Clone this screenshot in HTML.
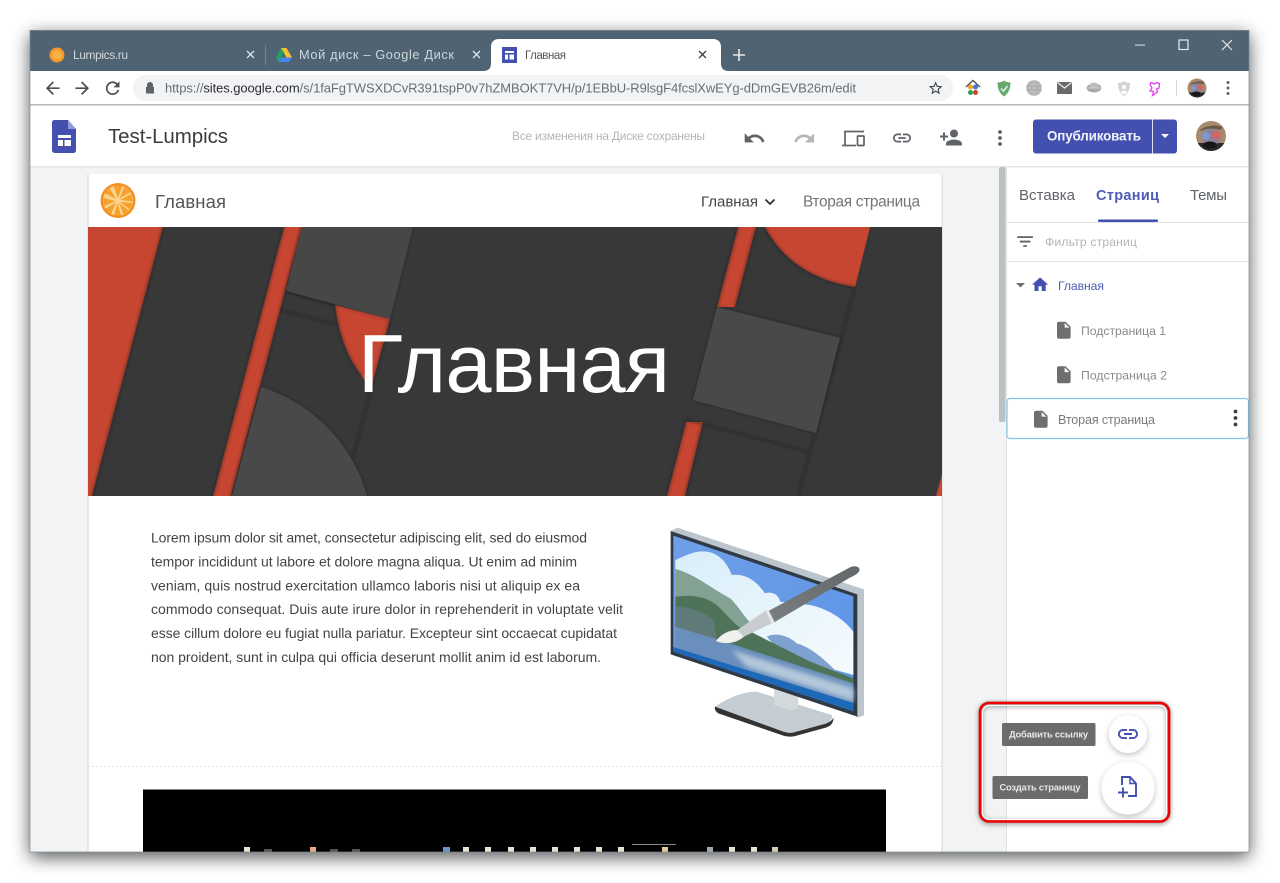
<!DOCTYPE html>
<html lang="ru"><head><meta charset="utf-8"><title>Главная</title>
<style>
html,body{margin:0;padding:0;background:#fff;width:1280px;height:883px;overflow:hidden}
svg{display:block;filter:blur(.3px)}
text{font-family:"Liberation Sans","Noto Sans CJK SC",sans-serif;white-space:pre}
</style></head><body>
<svg xmlns="http://www.w3.org/2000/svg" width="1280" height="883" viewBox="0 0 1280 883">
<defs>
<filter id="win" x="-10%" y="-10%" width="120%" height="120%"><feGaussianBlur stdDeviation="9"/></filter>
<filter id="s" x="-20%" y="-20%" width="140%" height="140%"><feDropShadow dx="0" dy="0" stdDeviation="2" flood-color="#000" flood-opacity=".35"/></filter>
<filter id="b" x="-20%" y="-20%" width="140%" height="140%"><feGaussianBlur stdDeviation="1.400"/></filter>
<filter id="bb" x="-30%" y="-30%" width="160%" height="160%"><feGaussianBlur stdDeviation="1"/></filter>
<filter id="wb" x="-10%" y="-30%" width="120%" height="160%"><feGaussianBlur stdDeviation="7"/></filter>
<filter id="fab" x="-40%" y="-40%" width="180%" height="180%"><feDropShadow dx="0" dy="2" stdDeviation="3" flood-color="#000" flood-opacity=".25"/></filter>
<filter id="box" x="-10%" y="-10%" width="120%" height="120%"><feDropShadow dx="0" dy="1" stdDeviation="2.500" flood-color="#000" flood-opacity=".6"/></filter>
<clipPath id="hero"><rect x="88" y="227" width="854" height="269"/></clipPath>
<clipPath id="wc"><rect x="30" y="30" width="1219" height="822"/></clipPath>
<clipPath id="avc"><circle cx="15" cy="15" r="15"/></clipPath>
<linearGradient id="sky" x1="0" y1="0" x2="1" y2="1"><stop offset="0" stop-color="#6f9fe8"/><stop offset="1" stop-color="#5b94e6"/></linearGradient>
<linearGradient id="cloud" x1="0" y1="0" x2="1" y2="1"><stop offset="0" stop-color="#d8eefa"/><stop offset="1" stop-color="#f6fbfe"/></linearGradient>
<linearGradient id="brush" x1="0" y1="1" x2="1" y2="0"><stop offset="0" stop-color="#7b7f82"/><stop offset="1" stop-color="#62676a"/></linearGradient>
<path id="file" d="M6 2c-1.100 0-2 .9-2 2v16c0 1.100.9 2 2 2h12c1.100 0 2-.9 2-2V8l-6-6H6zm7 7V3.500L18.500 9H13z"/>
<path id="link" d="M3.900 12c0-1.710 1.390-3.100 3.100-3.100h4V7H7c-2.760 0-5 2.240-5 5s2.240 5 5 5h4v-1.900H7c-1.710 0-3.100-1.390-3.100-3.100zM8 13h8v-2H8v2zm9-6h-4v1.900h4c1.710 0 3.100 1.390 3.100 3.100s-1.390 3.100-3.100 3.100h-4V17h4c2.760 0 5-2.240 5-5s-2.240-5-5-5z"/>
<g id="face" clip-path="url(#avc)">
<rect width="30" height="30" fill="#a98a6c"/>
<rect y="22" width="30" height="8" fill="#2a2a2c"/>
<ellipse cx="15" cy="16" rx="9" ry="9" fill="#8a7f98" filter="url(#bb)"/>
<ellipse cx="10" cy="15" rx="4" ry="4" fill="#7f9ccf" filter="url(#bb)"/>
<ellipse cx="20" cy="14" rx="4" ry="4" fill="#e0625a" filter="url(#bb)"/>
<path d="M4 9c5-4 17-6 22-3l-1 3c-7-2-15-2-20 1z" fill="#6a5a48"/>
<ellipse cx="14" cy="24" rx="7" ry="3.500" fill="#17171a"/>
</g>
</defs>

<!-- window shadow -->
<rect x="30" y="35" width="1219" height="822" fill="#000" opacity=".68" filter="url(#win)"/>
<rect x="30" y="30" width="1219" height="822" fill="#fff"/>

<g clip-path="url(#wc)">
<!-- title bar -->
<rect x="30" y="30" width="1219" height="41" fill="#4f6372"/>
<!-- tab 1 -->
<circle cx="57" cy="55" r="7.500" fill="#f39a2b"/><circle cx="57" cy="55" r="4.500" fill="#f8b24c"/>
<text x="73" y="59" font-size="12" fill="#cfd7dc" textLength="55" lengthAdjust="spacing">Lumpics.ru</text>
<path d="M247 51l7 7M254 51l-7 7" stroke="#dfe4e8" stroke-width="1.300"/>
<rect x="265" y="45" width="1" height="20" fill="#74848f"/>
<!-- drive -->
<path d="M281 48h5.500l5.500 9.500h-5.500z" fill="#f9c02e"/><path d="M281 48l-5 9.500 2.500 4.500 5.500-9.500z" fill="#1fa463"/><path d="M278.500 62h10.500l3-4.500h-10.500z" fill="#4285f4"/>
<text x="299" y="59" font-size="12.800" fill="#cfd7dc" textLength="155" lengthAdjust="spacing">Мой диск – Google Диск</text>
<path d="M473 51l7 7M480 51l-7 7" stroke="#dfe4e8" stroke-width="1.300"/>
<!-- active tab -->
<path d="M483 71c6 0 8-3 8-8V47c0-5 3-8 8-8h214c5 0 8 3 8 8v16c0 5 2 8 8 8z" fill="#fff"/>
<rect x="502" y="47" width="15" height="16" fill="#4350af"/><rect x="505" y="51" width="9" height="2" fill="#fff"/><rect x="505" y="54.500" width="3" height="5" fill="#fff"/><rect x="509.500" y="54.500" width="4.500" height="5" fill="#fff"/>
<text x="525" y="59" font-size="11.500" fill="#555" textLength="41" lengthAdjust="spacing">Главная</text>
<path d="M699 51l7 7M706 51l-7 7" stroke="#444" stroke-width="1.400"/>
<path d="M739 49v12M733 55h12" stroke="#e6eaed" stroke-width="1.600"/>
<!-- window controls -->
<rect x="1135" y="44.500" width="10" height="1.200" fill="#c8d0d6"/>
<rect x="1179" y="40" width="9" height="9.500" fill="none" stroke="#e6eaed" stroke-width="1.200"/>
<path d="M1222 40l10 10M1232 40l-10 10" stroke="#e6eaed" stroke-width="1.200"/>

<!-- toolbar -->
<rect x="30" y="71" width="1219" height="34" fill="#fff"/>
<rect x="30" y="104" width="1219" height="1.500" fill="#b4b6b8"/>
<g fill="#4d5155">
<path transform="translate(42.500 78) scale(.85)" d="M20 11H7.830l5.590-5.590L12 4l-8 8 8 8 1.410-1.410L7.830 13H20v-2z"/>
<path transform="translate(72 78) scale(.85)" d="M12 4l-1.410 1.410L16.170 11H4v2h12.170l-5.580 5.590L12 20l8-8z"/>
<path transform="translate(102.500 78) scale(.85)" d="M17.650 6.350C16.200 4.900 14.210 4 12 4c-4.420 0-7.990 3.580-7.990 8s3.570 8 7.990 8c3.730 0 6.840-2.550 7.730-6h-2.080c-.82 2.330-3.040 4-5.650 4-3.310 0-6-2.690-6-6s2.690-6 6-6c1.660 0 3.140.69 4.220 1.780L13 11h7V4l-2.350 2.350z"/>
</g>
<rect x="133" y="75" width="820" height="26" rx="13" fill="#f1f3f4"/>
<path d="M147 87v-2a3 3 0 0 1 6 0v2h1v6.500h-8V87z" fill="#5f6368"/>
<text x="165" y="92.500" font-size="13" fill="#6a6e73" textLength="691" lengthAdjust="spacing">https://<tspan fill="#2b2d30">sites.google.com</tspan>/s/1faFgTWSXDCvR391tspP0v7hZMBOKT7VH/p/1EBbU-R9lsgF4fcslXwEYg-dDmGEVB26m/edit</text>
<path transform="translate(927.500 80) scale(.68)" fill="#3c4043" d="M22 9.240l-7.190-.62L12 2 9.190 8.630 2 9.240l5.460 4.730L5.820 21 12 17.270 18.180 21l-1.630-7.030L22 9.240zM12 15.400l-3.760 2.270 1-4.280-3.320-2.880 4.380-.38L12 6.100l1.710 4.040 4.380.38-3.320 2.880 1 4.280L12 15.400z"/>
<!-- extensions -->
<path d="M966 87l7-6.500 7 6.500" fill="none" stroke="#555" stroke-width="1.500"/>
<circle cx="970.500" cy="87" r="2.500" fill="#f4a020"/><circle cx="975.500" cy="87" r="2.500" fill="#3a78d8"/><circle cx="970.500" cy="92.500" r="2.500" fill="#2f9e4f"/><circle cx="975.500" cy="92.500" r="2.500" fill="#d93a2f"/>
<path d="M997.500 82.500c3 0 5-1 6.500-2 1.500 1 3.500 2 6.500 2 0 6-2 11-6.500 14-4.500-3-6.500-8-6.500-14z" fill="#68a96f"/>
<path d="M1001 88.500l2.500 2.500 4-5" fill="none" stroke="#e8f3e8" stroke-width="1.500"/>
<circle cx="1034" cy="88" r="7.800" fill="#b0b0b0"/><path d="M1026.500 88h15M1034 80.500v15M1028 84h12M1028 92h12" stroke="#c8c8c8" stroke-width=".8" fill="none"/>
<rect x="1057" y="82" width="15" height="12" fill="#6a6a6a"/><path d="M1057.500 82.500l7 5.500 7-5.500" fill="none" stroke="#e9e9e9" stroke-width="1.300"/>
<ellipse cx="1094" cy="88" rx="7.500" ry="4.500" fill="#a9a9a9"/><ellipse cx="1094" cy="85.500" rx="4.500" ry="3" fill="#bdbdbd"/><path d="M1087 88h14" stroke="#e0e0e0" stroke-width=".8"/>
<path d="M1118 83c3 0 4.500-1 6-2 1.500 1 3 2 6 2 0 6-1.500 10.500-6 13.500-4.500-3-6-7.500-6-13.500z" fill="#d4d6d6"/><circle cx="1124" cy="87" r="2" fill="#fff"/><path d="M1120.500 92.500c1-2.500 6-2.500 7 0l-3.500 2.500z" fill="#fff"/>
<path d="M1151 82.500l3 1.500 3-1.500 2.500 1-.5 4.500-2.500 1 1 3-5 3.500 1-4-3.500-.5 2-3-2-3.500z" fill="none" stroke="#e040f0" stroke-width="1.300"/>
<rect x="1176" y="80" width="1" height="16" fill="#d5d5d5"/>
<use href="#face" transform="translate(1187.500 78.500) scale(.633)"/>
<g fill="#5f6368"><circle cx="1228" cy="82.500" r="1.500"/><circle cx="1228" cy="88" r="1.500"/><circle cx="1228" cy="93.500" r="1.500"/></g>

<!-- app header -->
<rect x="30" y="105.500" width="1219" height="61.500" fill="#fff"/>
<rect x="30" y="166" width="1219" height="1.500" fill="#e4e6e7"/>
<path d="M55 120h13l8 9v21.500c0 1.400-1.100 2.500-2.500 2.500h-18.500c-1.400 0-3-1.100-3-2.500v-28c0-1.400 1.100-2.500 2.500-2.500z" fill="#4350af"/>
<path d="M68 120v9h8z" fill="#8f99d6"/>
<rect x="58" y="135" width="13" height="3" fill="#fff"/><rect x="58" y="140" width="5" height="6" fill="#fff"/><rect x="64.500" y="140" width="6.500" height="6" fill="#fff"/>
<text x="108" y="143" font-size="20.500" fill="#3c3c3c" textLength="120" lengthAdjust="spacing">Test-Lumpics</text>
<text x="512" y="140" font-size="11.800" fill="#b4b4b4" textLength="193" lengthAdjust="spacing">Все изменения на Диске сохранены</text>
<path transform="translate(743 127) scale(.95)" fill="#5f6368" stroke="#5f6368" stroke-width=".4" d="M12.500 8c-2.650 0-5.050.99-6.900 2.600L2 7v9h9l-3.620-3.620c1.390-1.160 3.160-1.880 5.120-1.880 3.540 0 6.550 2.310 7.600 5.500l2.370-.78C21.080 11.030 17.150 8 12.500 8z"/>
<path transform="translate(793 127) scale(.95)" fill="#b4b6b8" stroke="#b4b6b8" stroke-width=".4" d="M18.400 10.600C16.550 8.990 14.150 8 11.500 8c-4.650 0-8.580 3.030-9.960 7.220L3.900 16c1.050-3.190 4.050-5.500 7.600-5.500 1.950 0 3.730.72 5.120 1.880L13 16h9V7l-3.600 3.600z"/>
<g fill="none" stroke="#5f6368" stroke-width="1.700">
<path d="M845 145v-13.500h19"/><path d="M842 145.500h14"/><rect x="857.500" y="136" width="6.500" height="9.500" rx=".6"/>
</g>
<use href="#link" transform="translate(891.200 127.200) scale(.9)" fill="#5f6368"/>
<path transform="translate(939 125.500)" fill="#5f6368" d="M15 12c2.210 0 4-1.790 4-4s-1.790-4-4-4-4 1.790-4 4 1.790 4 4 4zm-9-2V7H4v3H1v2h3v3h2v-3h3v-2H6zm9 4c-2.670 0-8 1.340-8 4v2h16v-2c0-2.660-5.330-4-8-4z"/>
<g fill="#5f6368"><circle cx="1000" cy="132" r="1.900"/><circle cx="1000" cy="138" r="1.900"/><circle cx="1000" cy="144" r="1.900"/></g>
<rect x="1033" y="119.500" width="144" height="34" rx="3" fill="#4350af"/>
<rect x="1152" y="119.500" width="1" height="34" fill="#dfe2f2"/>
<text x="1047" y="140.500" font-size="13.400" font-weight="bold" fill="#f2f3fa" textLength="94" lengthAdjust="spacing">Опубликовать</text>
<path d="M1161 134h8l-4 4z" fill="#fff"/>
<use href="#face" transform="translate(1196 121)"/>

<!-- canvas -->
<rect x="30" y="167.500" width="976" height="685" fill="#f1f3f4"/>
<rect x="999" y="167" width="6.500" height="255" rx="2" fill="#bcc0c0"/>
<rect x="88" y="174" width="854" height="680" fill="#fff"/>
<path d="M88 174v680M942 174v680" stroke="#dcdcdc" stroke-width="1.200"/>
<text x="155" y="208" font-size="18.500" fill="#555" textLength="71" lengthAdjust="spacing">Главная</text>
<!-- orange logo -->
<circle cx="118" cy="200.500" r="17.500" fill="#f58f22"/><circle cx="118" cy="200.500" r="15" fill="#fbd38d"/>
<g fill="#f6a02e"><path d="M118 198l-4.500-12.500h9z"/><path d="M119.500 198.500l5-11.500 6 5z"/><path d="M120 200l11-6 2 7.500z"/><path d="M120 202l12.500 1-2 7z"/><path d="M119 203l10.500 8-5.500 4.500z"/><path d="M117.500 203l3.500 12.500h-7z"/><path d="M116 202.500l-5 11.500-6-5z"/><path d="M115.500 201l-11.500 5-1-8z"/><path d="M116 199l-11.500-6 5-5z"/></g>
<text x="701" y="206.500" font-size="15" fill="#444" textLength="57" lengthAdjust="spacing">Главная</text>
<path d="M765.500 199.500l4.500 4.500 4.500-4.500" fill="none" stroke="#333" stroke-width="1.800"/>
<text x="803" y="206.500" font-size="15.400" fill="#757575" textLength="117" lengthAdjust="spacing">Вторая страница</text>

<!-- hero -->
<g clip-path="url(#hero)">
<rect x="88" y="227" width="854" height="269" fill="#383838"/>
<path d="M80 227h83l-71 269H80z" fill="#c64631"/>
<path d="M284 227h18l-71 269h-18z" fill="#c64631"/>
<path d="M335 305l55 14-19 70-10-14c-14-18-23-43-26-70z" fill="#c64631"/>
<path d="M765 227h105l-15 60c-42-6-74-28-90-60z" fill="#c64631"/>
<path d="M738 227h18l-21 80h-18z" fill="#c64631"/>
<path d="M686 422h17l-18 74h-18z" fill="#c64631"/>
<path d="M935 500l7-26v26z" fill="#c64631"/>
<g filter="url(#b)" fill="none" stroke="#1c1c1c" stroke-width="2.500" opacity=".42">
<path d="M163 227l-71 269M284 227l-71 269M302 227l-71 269"/>
<path d="M390 319l-37 138M855 287l-57 209M756 227l-21 80M738 227l-21 80M703 422l-18 74M686 422l-19 74"/>
<path d="M280 310l58 15M286 291l49 14M335 305c3 27 12 52 26 70M765 227c16 33 48 54 90 60"/>
<path d="M687 420l123 32"/>
</g>
<path d="M302 227h111l-23 92-104-28z" fill="#464646" filter="url(#s)"/>
<path d="M367 496c-14-50-52-92-106-109l-29 109z" fill="#484848" filter="url(#s)"/>
<path d="M717 307l123 31-24 95-123-33z" fill="#484848" filter="url(#s)"/>
</g>
<text x="358" y="392" font-size="83" fill="#fff" textLength="312" lengthAdjust="spacing">Главная</text>

<!-- body text -->
<g font-size="14" fill="#444">
<text x="151" y="542.500" textLength="436" lengthAdjust="spacing">Lorem ipsum dolor sit amet, consectetur adipiscing elit, sed do eiusmod</text>
<text x="151" y="566.500" textLength="426" lengthAdjust="spacing">tempor incididunt ut labore et dolore magna aliqua. Ut enim ad minim</text>
<text x="151" y="590.500" textLength="429" lengthAdjust="spacing">veniam, quis nostrud exercitation ullamco laboris nisi ut aliquip ex ea</text>
<text x="151" y="614" textLength="472" lengthAdjust="spacing">commodo consequat. Duis aute irure dolor in reprehenderit in voluptate velit</text>
<text x="151" y="638" textLength="466" lengthAdjust="spacing">esse cillum dolore eu fugiat nulla pariatur. Excepteur sint occaecat cupidatat</text>
<text x="151" y="662" textLength="450" lengthAdjust="spacing">non proident, sunt in culpa qui officia deserunt mollit anim id est laborum.</text>
</g>

<!-- monitor illustration -->
<g transform="translate(650 515) scale(.33333)">
<path d="M195 575c45-30 85-45 125-45l225 70c5 10-5 20-15 25l-90 25c-15 5-25 5-40 0z" fill="#c5ccd2"/>
<path d="M195 575l205 75c15 5 25 5 40 0l90-25c10-5 20-10 20-20 2 15-5 27-20 32l-90 25c-15 5-30 3-40 0L205 595c-8-5-12-12-10-20z" fill="#333"/>
<path d="M372 518h73v62l-22 6-51-16z" fill="#d4d9dc"/>
<path d="M62 48l20-10 560 185v378l-20 7z" fill="#bcc5cc"/>
<path d="M62 48l560 190v367L62 418z" fill="#2f3a45"/>
<path d="M70 62l540 182v345L70 410z" fill="url(#sky)"/>
<path d="M76 135c35-15 60-30 94-25 40 5 65 40 75 70 45-5 75 20 100 55 35-10 45 20 45 25l90 10c50 10 100 40 130 80v130L76 330z" fill="url(#cloud)"/>
<path d="M76 162c55 13 115 63 165 88 30 30 50 70 70 80l-10 60L76 335z" fill="#84a294"/>
<path d="M350 365c30-15 70 0 90 20 40 10 80 45 120 85l50 30v10L420 445z" fill="#7ea2d0"/>
<path d="M76 245c45-5 95-5 135 35 30 30 60 70 90 70 40 20 100 50 180 90l129 50v25L240 395 76 335z" fill="#4f7358"/>
<path d="M76 275c35 0 75 10 115 40l10 60L76 335z" fill="#5f7a78"/>
<path d="M76 335l164 50 370 120v65L76 402z" fill="#6a8fbd"/>
<path d="M245 405l365 115v38L290 455z" fill="#b4c8da" filter="url(#wb)"/>
<path d="M70 396l540 168v25L70 410z" fill="#1d69b8"/>
<path d="M355 288l245-131c15-7 32-2 28 11-6 10-16 14-28 20L372 322z" fill="url(#brush)"/>
<path d="M347 287l8-3 18 36-8 5z" fill="#e5e8e8"/>
<path d="M347 287l18 38-83 40-20-20z" fill="#c9cdcf"/>
<path d="M198 378c17-23 42-33 64-33l20 20c-22 20-57 25-84 13z" fill="#eef1ee"/>
</g>
<!-- dashed separator -->
<path d="M88 766.500h854" stroke="#e2e2e2" stroke-width="1" stroke-dasharray="2 2"/>
<!-- black video -->
<rect x="143" y="789.500" width="743" height="63" fill="#000"/>
<g fill="#e8e2d2">
<rect x="244" y="847" width="6" height="5"/><rect x="310" y="847" width="6" height="5" fill="#e8a888"/>
<rect x="443" y="847" width="7" height="5" fill="#6d93c4"/><rect x="463" y="847" width="6" height="5"/><rect x="485" y="847" width="6" height="5"/><rect x="508" y="847" width="6" height="5"/><rect x="530" y="847" width="6" height="5"/><rect x="552" y="847" width="6" height="5"/><rect x="574" y="847" width="6" height="5"/><rect x="596" y="847" width="6" height="5"/><rect x="618" y="847" width="6" height="5"/><rect x="662" y="847" width="6" height="5" fill="#e8c8a0"/><rect x="707" y="847" width="6" height="5" fill="#a0a8b0"/><rect x="729" y="847" width="6" height="5"/><rect x="751" y="847" width="6" height="5"/><rect x="772" y="847" width="6" height="5" fill="#d8cdb0"/>
</g>
<rect x="632" y="844" width="44" height="1" fill="#8a8a8a"/>
<g fill="#555"><rect x="264" y="849" width="8" height="3"/><rect x="330" y="849" width="8" height="3"/><rect x="352" y="849" width="8" height="3"/></g>

<!-- side panel -->
<rect x="1006" y="167.500" width="243" height="685" fill="#fff"/>
<rect x="1006" y="167.500" width="1" height="685" fill="#e0e0e0"/>
<text x="1019" y="200" font-size="15" fill="#5f6368" textLength="56" lengthAdjust="spacing">Вставка</text>
<text x="1096" y="200" font-size="14.500" font-weight="bold" fill="#4f5cb6" textLength="63" lengthAdjust="spacing">Страниц</text>
<text x="1190" y="200" font-size="15" fill="#5f6368" textLength="37" lengthAdjust="spacing">Темы</text>
<rect x="1098" y="219.500" width="60" height="2.500" rx="1" fill="#4350af"/>
<rect x="1007" y="222" width="242" height="1" fill="#e2e2e2"/>
<rect x="1007" y="261" width="242" height="1" fill="#e2e2e2"/>
<path transform="translate(1014.500 231) scale(.88)" fill="#5f6368" d="M10 18h4v-2h-4v2zM3 6v2h18V6H3zm3 7h12v-2H6v2z"/>
<text x="1045" y="246" font-size="12.200" fill="#b4b4b4" textLength="92" lengthAdjust="spacing">Фильтр страниц</text>
<path d="M1016 283h9l-4.500 4.500z" fill="#6f6f6f"/>
<path transform="translate(1030.500 275) scale(.8)" fill="#4350af" d="M10 20v-6h4v6h5v-8h3L12 3 2 12h3v8z"/>
<text x="1058" y="290" font-size="12.200" fill="#4f5cb6" textLength="46" lengthAdjust="spacing">Главная</text>
<use href="#file" transform="translate(1053.600 320) scale(.85)" fill="#6f6f6f"/>
<text x="1081" y="335" font-size="12.200" fill="#8a8a8a" textLength="85" lengthAdjust="spacing">Подстраница 1</text>
<use href="#file" transform="translate(1053.600 364.500) scale(.85)" fill="#6f6f6f"/>
<text x="1081" y="379.500" font-size="12.200" fill="#8a8a8a" textLength="86" lengthAdjust="spacing">Подстраница 2</text>
<rect x="1007" y="398.500" width="241.500" height="40" rx="3" fill="#fff" stroke="#84c4ef" stroke-width="1.200"/>
<use href="#file" transform="translate(1030.600 409) scale(.85)" fill="#6f6f6f"/>
<text x="1058" y="424" font-size="12.500" fill="#7a7a7a" textLength="97" lengthAdjust="spacing">Вторая страница</text>
<g fill="#3c4043"><circle cx="1235.500" cy="411.500" r="1.900"/><circle cx="1235.500" cy="418" r="1.900"/><circle cx="1235.500" cy="424.500" r="1.900"/></g>

<!-- FABs -->
<circle cx="1128" cy="734" r="19" fill="#fff" filter="url(#fab)"/>
<use href="#link" transform="translate(1116 722)" fill="#4350af"/>
<circle cx="1128" cy="788" r="26.500" fill="#fff" filter="url(#fab)"/>
<path d="M1122 785v-8h8l6 6.500V796h-8" fill="none" stroke="#4350af" stroke-width="1.900"/>
<path d="M1130 777.500v6h6" fill="none" stroke="#4350af" stroke-width="1.500"/>
<path d="M1118 792.500h10M1123 787.500v10" stroke="#4350af" stroke-width="1.900"/>
<rect x="1002" y="723" width="93.500" height="23" rx="1.500" fill="#6b6b6b"/>
<text x="1009" y="737.500" font-size="9.300" font-weight="bold" fill="#e8e8e8" textLength="79" lengthAdjust="spacing">Добавить ссылку</text>
<rect x="992.500" y="776" width="95.500" height="23" rx="1.500" fill="#6b6b6b"/>
<text x="999.500" y="790.500" font-size="9.300" font-weight="bold" fill="#e8e8e8" textLength="81" lengthAdjust="spacing">Создать страницу</text>

<!-- highlight box -->
<rect x="980.500" y="703.500" width="188" height="118" rx="9" fill="none" stroke="#888" stroke-width="5" opacity=".55" filter="url(#box)"/>
<rect x="982.500" y="705.500" width="184" height="114" rx="7" fill="none" stroke="#fff" stroke-width="1"/>
<rect x="980" y="703" width="189" height="118.500" rx="9" fill="none" stroke="#f00000" stroke-width="2.600"/>
</g>
<rect x="30" y="30.500" width="1219" height="821.500" fill="none" stroke="#7c8a94" stroke-width="1" opacity=".7"/>
</svg>
</body></html>
